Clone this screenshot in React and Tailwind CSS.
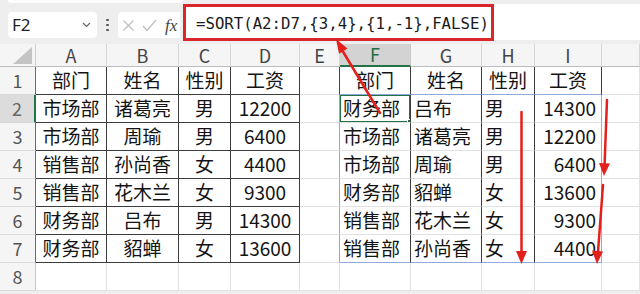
import React from "react";

const LEFT = [
  ["部门", "姓名", "性别", "工资"],
  ["市场部", "诸葛亮", "男", "12200"],
  ["市场部", "周瑜", "男", "6400"],
  ["销售部", "孙尚香", "女", "4400"],
  ["销售部", "花木兰", "女", "9300"],
  ["财务部", "吕布", "男", "14300"],
  ["财务部", "貂蝉", "女", "13600"],
];
const RIGHT = [
  ["部门", "姓名", "性别", "工资"],
  ["财务部", "吕布", "男", "14300"],
  ["市场部", "诸葛亮", "男", "12200"],
  ["市场部", "周瑜", "男", "6400"],
  ["财务部", "貂蝉", "女", "13600"],
  ["销售部", "花木兰", "女", "9300"],
  ["销售部", "孙尚香", "女", "4400"],
];
const COLS = ["A", "B", "C", "D", "E", "F", "G", "H", "I", ""];

const GRID_LINE = "border-r-[#e1e1e1] border-b-[#e1e1e1]";

function cellInfo(r, c) {
  let text = "";
  let cls = "flex items-center whitespace-nowrap overflow-hidden border-r border-b text-[19px] text-[#141414] bg-white ";
  if (c <= 3 && r <= 7) {
    text = LEFT[r - 1][c];
    cls += "justify-center border-r-[#3d3d3d] border-b-[#3d3d3d]";
  } else if (c === 4 && r <= 7) {
    cls += r === 1 ? "border-r-[#3d4a42] border-b-[#e1e1e1]" : "border-r-[#8fa9d8] border-b-[#e1e1e1]";
  } else if (c >= 5 && c <= 8 && r <= 7) {
    text = RIGHT[r - 1][c - 5];
    const rightB = c === 8 && r >= 2 ? "border-r-[#8fa9d8]" : "border-r-[#3d3d3d]";
    const botB = r === 1 || r === 7 ? "border-b-[#8fa9d8]" : "border-b-[#e1e1e1]";
    let align;
    if (r === 1) align = "justify-center";
    else if (c === 8) align = "justify-end pr-[5px]";
    else align = "justify-start pl-[3px]";
    cls += rightB + " " + botB + " " + align;
  } else {
    cls += GRID_LINE;
  }
  return { text, cls };
}

function Arrows() {
  return (
    <svg className="absolute left-0 top-0 pointer-events-none z-20" width="640" height="294" viewBox="0 0 640 294">
      <g stroke="#e3201b" strokeWidth="2.5" strokeLinecap="round" fill="none">
        <line x1="380" y1="113" x2="342" y2="50" />
        <line x1="521.5" y1="112" x2="521.5" y2="252" />
        <line x1="607" y1="100" x2="604.6" y2="164" />
        <line x1="603" y1="185" x2="598" y2="252" />
      </g>
      <g fill="#e3201b">
        <polygon points="336,39 347.5,48.5 339,53.8" />
        <polygon points="516,251 527,251 521.5,264" />
        <polygon points="599,163 610,163.5 604,176" />
        <polygon points="592,250.5 603,251.5 597,264" />
      </g>
    </svg>
  );
}

export default function App() {
  const cells = [];
  cells.push(
    <div key="corner" className="bg-[#f5f5f5] border-r border-b border-r-[#d0d0d0] border-b-[#bdbdbd] flex items-end justify-end pr-[2px] pb-[2px]">
      <svg width="20" height="17" viewBox="0 0 20 17">
        <polygon points="19,0 19,17 0,17" fill="#c4c4c4" />
      </svg>
    </div>
  );
  COLS.forEach((col, c) => {
    const sel = c === 5;
    cells.push(
      <div
        key={"h" + c}
        className={
          sel
            ? "flex items-center justify-center text-[18px] text-[#1d6b40] bg-[#d3d3d3] border-r border-b-2 border-r-[#c9c9c9] border-b-[#217346]"
            : "flex items-center justify-center text-[18px] text-[#444] bg-[#f5f5f5] border-r border-b border-r-[#d6d6d6] border-b-[#bdbdbd]"
        }
      >
        {col}
      </div>
    );
  });
  for (let r = 1; r <= 8; r++) {
    const rowSel = r === 2;
    cells.push(
      <div
        key={"r" + r}
        className={
          rowSel
            ? "flex items-center justify-center text-[18px] text-[#666] bg-[#dcdcdc] border-r-2 border-b border-r-[#217346] border-b-[#d6d6d6]"
            : r <= 7
            ? "flex items-center justify-center text-[18px] text-[#555] bg-[#f5f5f5] border-r border-b border-r-[#6a6a6a] border-b-[#dadada]"
            : "flex items-center justify-center text-[18px] text-[#555] bg-[#f5f5f5] border-r border-b border-r-[#c8c8c8] border-b-[#dadada]"
        }
      >
        {r}
      </div>
    );
    for (let c = 0; c < 10; c++) {
      const { text, cls } = cellInfo(r, c);
      const selected = r === 2 && c === 5;
      cells.push(
        <div key={r + "-" + c} className={cls + (selected ? " relative" : "")}>
          {text}
          {selected && (
            <div className="absolute -left-[1px] -top-[1px] -right-[1px] -bottom-[1px] border-2 border-[#217346] z-10">
              <div className="absolute -right-[4px] -bottom-[4px] w-[6px] h-[6px] bg-[#217346] border border-white" />
            </div>
          )}
        </div>
      );
    }
  }

  return (
    <div className="relative w-[640px] h-[294px] overflow-hidden bg-[#eeeeee] font-['Noto_Sans_CJK_SC',sans-serif]">
      <div className="h-[4px] flex">
        <div className="ml-2 w-[175px] h-[3px] bg-white rounded-b-[3px]" />
      </div>
      <div className="h-[36px] flex items-start">
        <div className="ml-2 mt-[8px] w-[89px] h-[26px] bg-white rounded-[4px] flex items-center justify-between pl-[4px] pr-[6px]">
          <span className="text-[17px] text-[#222] font-['Noto_Sans',sans-serif]">F2</span>
          <svg width="9" height="6" viewBox="0 0 9 6">
            <polyline points="1,1 4.5,4.5 8,1" fill="none" stroke="#666" strokeWidth="1.2" />
          </svg>
        </div>
        <div className="w-[21px] h-[36px] flex flex-col items-center justify-center gap-[2.5px] pt-[6px]">
          <div className="w-[2.5px] h-[2.5px] rounded-full bg-[#555]" />
          <div className="w-[2.5px] h-[2.5px] rounded-full bg-[#555]" />
          <div className="w-[2.5px] h-[2.5px] rounded-full bg-[#555]" />
        </div>
        <div className="mt-[8px] w-[62px] h-[26px] bg-white rounded-l-[4px] flex items-center pl-[4px]">
          <svg width="13" height="13" viewBox="0 0 13 13">
            <path d="M1.5 1.5 L11.5 11.5 M11.5 1.5 L1.5 11.5" stroke="#bdbdbd" strokeWidth="1.2" fill="none" />
          </svg>
          <svg className="ml-[7px]" width="15" height="13" viewBox="0 0 15 13">
            <path d="M1 7 L5 11.5 L14 1" stroke="#bdbdbd" strokeWidth="1.2" fill="none" />
          </svg>
          <span className="ml-[8px] text-[17px] italic text-[#444] font-['Liberation_Serif',serif] leading-none">fx</span>
        </div>
        <div className="ml-[3px] flex-1 h-[36px] bg-white flex">
          <div className="w-[311px] h-[37px] border-[3px] border-[#d8262a] flex items-center pl-[10px] pt-[2px]">
            <span className="text-[15.7px] text-[#1a1a1a] font-['DejaVu_Sans_Mono',monospace] whitespace-nowrap">
              =SORT(A2:D7,{"{"}3,4{"}"},{"{"}1,-1{"}"},FALSE)
            </span>
          </div>
        </div>
      </div>
      <div className="h-[4px]" />
      <div className="grid grid-cols-[36px_71px_72px_52px_69px_40px_71px_71px_53px_67px_38px] grid-rows-[23px_repeat(8,28px)] bg-white">
        {cells}
      </div>
      <Arrows />
    </div>
  );
}
